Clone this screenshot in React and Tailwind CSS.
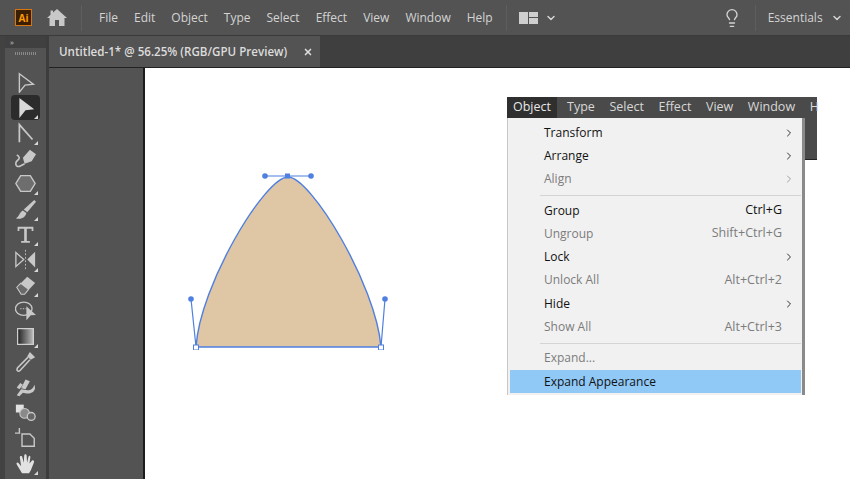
import { ChevronDown, ChevronRight, Lightbulb, X } from "lucide-react";

const topMenu = ["File", "Edit", "Object", "Type", "Select", "Effect", "View", "Window", "Help"];
const stripMenu = ["Type", "Select", "Effect", "View", "Window", "H"];

const menuRows = [
  { label: "Transform", arrow: true },
  { label: "Arrange", arrow: true },
  { label: "Align", arrow: true, off: true, sep: true },
  { label: "Group", keys: "Ctrl+G" },
  { label: "Ungroup", keys: "Shift+Ctrl+G", off: true },
  { label: "Lock", arrow: true },
  { label: "Unlock All", keys: "Alt+Ctrl+2", off: true },
  { label: "Hide", arrow: true },
  { label: "Show All", keys: "Alt+Ctrl+3", off: true, sep: true },
  { label: "Expand...", off: true },
  { label: "Expand Appearance", active: true },
];

const c = "#c8c8c8";
const tools = [
  { icon: <path d="M5 2 L21 14 L11.500 15 L5 23 Z" fill="none" stroke={c} strokeWidth="1.6" /> },
  { active: true, more: true, icon: <path d="M5 1 L22 14 L12 15 L5 24 Z" fill="#d8d8d8" /> },
  { more: true, icon: <path d="M5 23 V3 L20 20" fill="none" stroke={c} strokeWidth="2" /> },
  {
    icon: (
      <g>
        <path d="M9 11 L17 2 L24 7 L19 15 L11 18 Z" fill={c} />
        <path d="M11 18 L5 21 C0 22 0 16 3 14 C6 12 5 9 2 8" fill="none" stroke={c} strokeWidth="1.8" />
      </g>
    ),
  },
  { more: true, icon: <path d="M6.500 3 H17.500 L23 12 L17.500 21 H6.500 L1 12 Z" fill="#6e6e6e" stroke={c} strokeWidth="1.6" /> },
  {
    more: true,
    icon: (
      <g fill={c}>
        <path d="M22 1 L24 3 L14 15 L10 12 Z" />
        <path d="M9 13 L13 16 C12 21 7 24 1 22 C5 20 5 15 9 13 Z" />
      </g>
    ),
  },
  { more: true, icon: <path d="M3 3 H21 V8 H19 V5.500 H13.500 V19.500 H17 V21.500 H7 V19.500 H10.500 V5.500 H5 V8 H3 Z" fill={c} /> },
  {
    more: true,
    icon: (
      <g>
        <path d="M1 4 L10 12 L1 20 Z" fill="none" stroke={c} strokeWidth="1.5" />
        <path d="M23 3 V21 L14 12 Z" fill={c} />
        <path d="M12 1 V23" stroke={c} strokeWidth="1" strokeDasharray="2 2" />
      </g>
    ),
  },
  {
    more: true,
    icon: (
      <g>
        <path d="M2 14 L14 2 L23 9 L11 22 H7 Z" fill={c} />
        <path d="M2 14 L6.500 9.500 L15.500 16.500 L11 22 H7 Z" fill="#6a6a6a" stroke={c} strokeWidth="1.2" />
      </g>
    ),
  },
  {
    icon: (
      <g>
        <ellipse cx="10" cy="10" rx="9.500" ry="7.500" fill="none" stroke={c} strokeWidth="1.5" />
        <path d="M6 10 H13" stroke={c} strokeWidth="1.4" strokeDasharray="1.5 1.5" />
        <path d="M13 7 L24 17 L18 17.500 L13 23 Z" fill={c} />
      </g>
    ),
  },
  {
    more: true,
    icon: (
      <g>
        <defs>
          <linearGradient id="grad" x1="0" x2="1" y1="0" y2="0">
            <stop offset="0" stopColor="#222" />
            <stop offset="1" stopColor="#bbb" />
          </linearGradient>
        </defs>
        <rect x="3" y="3" width="18" height="18" fill="url(#grad)" stroke="#d0d0d0" strokeWidth="1.4" />
      </g>
    ),
  },
  {
    icon: (
      <g>
        <path d="M17 1 L23 7 L18 10 L14 6 Z" fill={c} />
        <path d="M15 7 L3 19 C1 23 4 24 6 22 L17 10" fill="none" stroke={c} strokeWidth="1.8" />
      </g>
    ),
  },
  {
    icon: (
      <g fill={c}>
        <path d="M2 22 L7 15 L13 16 C17 17 21 15 22 10 C25 16 20 21 13 20 L9 19 L5 23 Z" />
        <path d="M7 14 L12 4 L17 6 L12 15 Z" />
        <path d="M2 13 L6 8 L9 10 L5 15 Z" />
      </g>
    ),
  },
  {
    icon: (
      <g>
        <rect x="1" y="3" width="9" height="9" fill="#e0e0e0" />
        <circle cx="11" cy="13" r="5.500" fill="#8a8a8a" stroke={c} strokeWidth="1.2" />
        <circle cx="18.500" cy="16.500" r="4.500" fill="#666" stroke={c} strokeWidth="1.5" />
      </g>
    ),
  },
  {
    icon: (
      <g fill="none" stroke={c} strokeWidth="1.6">
        <path d="M8 8 H17 L22 13 V22 H8 Z" />
        <path d="M0 7 H6 M5 1 V7" />
      </g>
    ),
  },
  {
    more: true,
    icon: (
      <path
        d="M8 23 L2 13 C1 11 3 10 4.500 12 L7 15 L5.500 5 C5.500 3 8 3 8.500 5 L10 11 L10.500 3 C11 1 13 1 13.300 3 L13.800 11 L15.500 4 C16 2.500 18 3 17.500 5.500 L16.500 12 L19.500 8.500 C21 7.500 22.500 9 21.500 11 L18 20 L16 23 Z"
        fill="#e2e2e2"
      />
    ),
  },
];

function ToolButton({ tool }) {
  return (
    <div
      className={`relative mx-auto flex h-[25.4px] w-[29px] items-center justify-center ${
        tool.active ? "rounded-sm bg-[#2b2b2b]" : ""
      }`}
    >
      <svg viewBox="0 0 24 24" className="h-[21px] w-[21px]">
        {tool.icon}
      </svg>
      {tool.more && (
        <span className="absolute bottom-[1px] right-[2px] h-0 w-0 border-b-[4px] border-l-[4px] border-b-[#d8d8d8] border-l-transparent" />
      )}
    </div>
  );
}

function TopBar() {
  return (
    <div className="flex h-[35px] items-center bg-[#535353] text-[12px] text-[#d4d4d4]">
      <div className="ml-[15px] flex h-[17px] w-[17px] items-center justify-center border border-[#d9760f] bg-[#3a1f04] text-[10px] font-bold leading-none text-[#ff9a00]">
        Ai
      </div>
      <svg viewBox="0 0 20 17" className="ml-[15px] h-[17px] w-[20px]">
        <path d="M10 0 L20 9 H17.500 V17 H12 V11 H8 V17 H2.500 V9 H0 L3.500 5.800 V1.500 H6 V3.500 Z" fill="#c8c8c8" />
      </svg>
      <div className="ml-[14px] h-[26px] w-px bg-[#5e5e5e]" />
      <div className="ml-[17px] flex gap-[16px]">
        {topMenu.map((name) => (
          <span key={name}>{name}</span>
        ))}
      </div>
      <div className="ml-[13px] h-[26px] w-px bg-[#5e5e5e]" />
      <div className="ml-[12px] grid h-[12px] w-[19px] grid-cols-2 gap-[1px]">
        <span className="row-span-2 bg-[#cfcfcf]" />
        <span className="bg-[#cfcfcf]" />
        <span className="bg-[#cfcfcf]" />
      </div>
      <ChevronDown className="ml-[7px] h-[12px] w-[12px]" strokeWidth={3} />
      <Lightbulb className="ml-[165px] h-[20px] w-[20px]" strokeWidth={1.6} />
      <div className="ml-[13px] h-[26px] w-px bg-[#5e5e5e]" />
      <span className="ml-[12px]">Essentials</span>
      <ChevronDown className="ml-[8px] h-[12px] w-[12px]" strokeWidth={3} />
    </div>
  );
}

function Toolbar() {
  return (
    <div className="ml-[5px] flex w-[44px] shrink-0 flex-col border-r-[3px] border-[#3d3d3d] bg-[#535353]">
      <div className="flex h-[12px] items-center bg-[#404040] pl-[5px] text-[8px] leading-none text-[#c8c8c8]">
        <span className="tracking-[-1px]">››</span>
      </div>
      <div className="mx-auto mt-[4px] h-[3px] w-[22px] bg-[repeating-linear-gradient(90deg,#8a8a8a_0,#8a8a8a_1px,transparent_1px,transparent_2px)]" />
      <div className="mt-[14.500px] flex flex-col">
        {tools.map((tool, i) => (
          <ToolButton key={i} tool={tool} />
        ))}
      </div>
    </div>
  );
}

function ObjectMenu() {
  return (
    <div className="absolute left-[362px] top-[29px] w-[310px]">
      <div className="flex h-[21px] items-center bg-[#4a4a4a] text-[12.5px] text-[#d8d8d8]">
        <span className="flex h-full items-center bg-[#2f2f2f] px-[6px] text-[#e8e8e8]">Object</span>
        <div className="ml-[10px] flex gap-[14.600px]">
          {stripMenu.map((name) => (
            <span key={name}>{name}</span>
          ))}
        </div>
      </div>
      <div className="absolute right-0 top-[21px] h-[42px] w-[14px] border-b border-[#222] bg-[#4a4a4a]" />
      <div className="relative w-[298px] border-r-[3px] border-l border-[#8a8a8a] border-l-[#c8c8c8] bg-[#f1f1f1] pb-[2px] pl-[2px] pr-[1px] pt-[3px] text-[12px]">
        {menuRows.map((row) => (
          <div key={row.label}>
            <div
              className={`flex h-[23.300px] items-center pl-[34px] pr-[6px] ${row.active ? "bg-[#90c8f6]" : ""} ${
                row.off ? "text-[#7c7c7c]" : "text-[#111111]"
              }`}
            >
              <span>{row.label}</span>
              {row.keys && <span className="ml-auto mr-[13px] text-[12.5px]">{row.keys}</span>}
              {row.arrow && (
                <ChevronRight
                  className={`ml-auto h-[12px] w-[12px] ${row.off ? "text-[#a0a0a0]" : "text-[#333333]"}`}
                  strokeWidth={2}
                />
              )}
            </div>
            {row.sep && <div className="mb-[3px] ml-[30px] mt-[4px] h-px bg-[#d4d4d4]" />}
          </div>
        ))}
      </div>
    </div>
  );
}

function Shape() {
  const blue = "#4f7fe0";
  return (
    <svg className="absolute left-[35px] top-[97px]" width="210" height="185" viewBox="180 165 210 185">
      <path d="M196 347 C200 285 265 177 288 177 C311 177 376 285 381 347 Z" fill="#dfc6a5" stroke={blue} strokeWidth="1.4" />
      <path d="M265 176 H311 M196 347 L191 299 M381 347 L385 299" stroke={blue} strokeWidth="1.2" fill="none" />
      <circle cx="265" cy="176" r="2.800" fill={blue} />
      <circle cx="311" cy="176" r="2.800" fill={blue} />
      <circle cx="191" cy="299" r="2.800" fill={blue} />
      <circle cx="385" cy="299" r="2.800" fill={blue} />
      <rect x="285" y="173.500" width="5" height="5" fill={blue} />
      <rect x="193.500" y="345" width="5" height="5" fill="#fff" stroke={blue} />
      <rect x="378.500" y="345" width="5" height="5" fill="#fff" stroke={blue} />
    </svg>
  );
}

export default function App() {
  return (
    <div className="relative flex h-[479px] w-[850px] flex-col overflow-hidden bg-[#424242] font-['Open_Sans','Noto_Sans',sans-serif]">
      <TopBar />
      <div className="h-px bg-[#3a3a3a]" />
      <div className="flex min-h-0 flex-1">
        <Toolbar />
        <div className="flex min-w-0 flex-1 flex-col">
          <div className="flex h-[32px] shrink-0 border-b border-[#222] bg-[#3f3f3f]">
            <div className="flex w-[271px] items-center bg-[#535353] pl-[10px] text-[11.6px] font-semibold text-[#dcdcdc]">
              <span>Untitled-1* @ 56.25% (RGB/GPU Preview)</span>
              <X className="ml-[16px] h-[10px] w-[10px]" strokeWidth={4} />
            </div>
          </div>
          <div className="flex min-h-0 flex-1 bg-[#535353]">
            <div className="w-[96px] shrink-0 border-r-2 border-[#1c1c1c]" />
            <div className="relative flex-1 bg-white" />
          </div>
        </div>
      </div>
      <div className="absolute left-[145px] top-[68px]">
        <Shape />
        <ObjectMenu />
      </div>
    </div>
  );
}
